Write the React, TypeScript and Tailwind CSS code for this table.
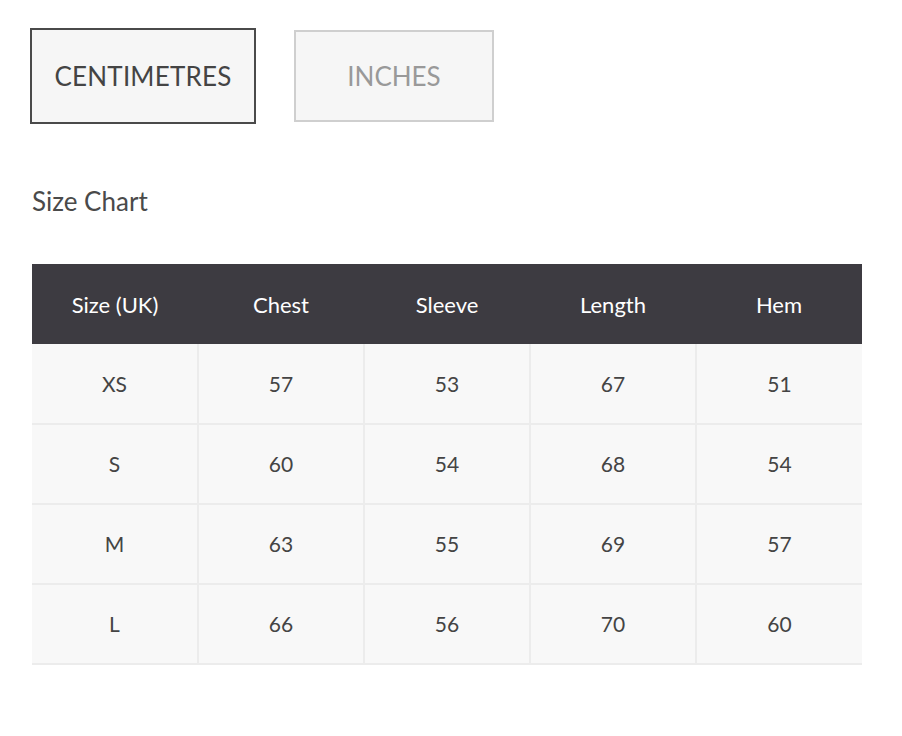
import React from 'react';

const HEAD = ['Size (UK)', 'Chest', 'Sleeve', 'Length', 'Hem'];
const ROWS = [
  ['XS', '57', '53', '67', '51'],
  ['S', '60', '54', '68', '54'],
  ['M', '63', '55', '69', '57'],
  ['L', '66', '56', '70', '60'],
];

const font = { fontFamily: 'Lato, "Open Sans", sans-serif' };

export default function App() {
  return (
    <div className="min-h-screen bg-white pt-[28px] pl-[30px]" style={font}>
      <div className="flex items-center gap-[38px]">
        <button className="w-[226px] h-[96px] border-2 border-[#4a4a4a] bg-[#f6f6f6] text-[26px] text-[#444] tracking-[0.2px]">
          CENTIMETRES
        </button>
        <button className="w-[200px] h-[92px] border-2 border-[#cfcfcf] bg-[#f6f6f6] text-[26px] text-[#999]">
          INCHES
        </button>
      </div>

      <h2 className="mt-[62px] ml-[2px] text-[26px] text-[#4a4a4a] leading-[30px]">Size Chart</h2>

      <table className="mt-[48px] ml-[2px] w-[830px] border-collapse table-fixed">
        <thead>
          <tr className="bg-[#3d3b41] h-[80px]">
            {HEAD.map((h) => (
              <th key={h} className="font-normal text-white text-[22px] text-center">
                {h}
              </th>
            ))}
          </tr>
        </thead>
        <tbody>
          {ROWS.map((r, i) => (
            <tr key={i} className="h-[80px] bg-[#f8f8f8] border-b-2 border-[#ececec]">
              {r.map((c, j) => (
                <td
                  key={j}
                  className={`text-center text-[21px] text-[#444] ${j < 4 ? 'border-r-2 border-[#ececec]' : ''}`}
                >
                  {c}
                </td>
              ))}
            </tr>
          ))}
        </tbody>
      </table>
    </div>
  );
}
